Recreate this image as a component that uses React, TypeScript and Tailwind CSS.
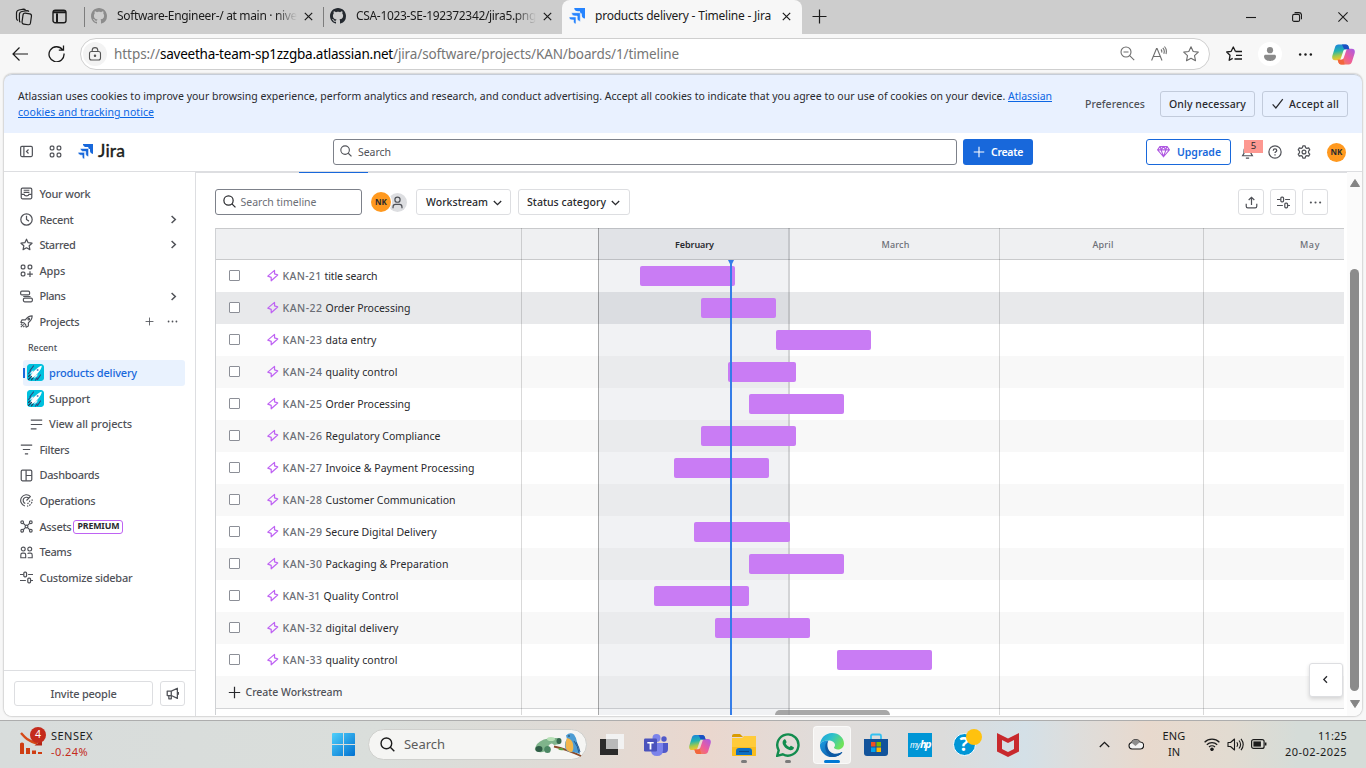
import { useLayoutEffect, useRef } from "react";
import type { ReactNode } from "react";

/* A run of text tracked so that it takes up a given width. */
function T({ w, className = "", children }: { w: number; className?: string; children: string }) {
  const ref = useRef<HTMLSpanElement>(null);
  useLayoutEffect(() => {
    const el = ref.current;
    if (!el) return;
    el.style.letterSpacing = "0px";
    const natural = el.getBoundingClientRect().width;
    el.style.letterSpacing = `${(w - natural) / children.length}px`;
  }, [w, children]);
  return (
    <span ref={ref} className={`inline-block shrink-0 whitespace-pre ${className}`}>
      {children}
    </span>
  );
}

/* Control label, set slightly below the optical centre. */
function L({ w, children }: { w: number; children: string }) {
  return <T w={w} className="pt-[1.5px]">{children}</T>;
}

/* Sidebar label. */
function S({ w, children }: { w: number; children: string }) {
  return <T w={w} className="pt-px">{children}</T>;
}

function Icon({
  children,
  className = "size-[13px]",
  box = 16,
  sw = 1.5,
}: {
  children: ReactNode;
  className?: string;
  box?: number;
  sw?: number;
}) {
  return (
    <svg
      viewBox={`0 0 ${box} ${box}`}
      className={`shrink-0 ${className}`}
      fill="none"
      stroke="currentColor"
      strokeWidth={sw}
    >
      {children}
    </svg>
  );
}

/* ---------- shared glyphs ---------- */

const Close = () => (
  <Icon className="size-[9px]" box={9} sw={1.2}>
    <path d="M.8.8l7.4 7.4M8.2.8L.8 8.2" />
  </Icon>
);
const Plus = ({ className = "size-[13px]" }: { className?: string }) => (
  <Icon className={className}>
    <path d="M8 1v14M1 8h14" />
  </Icon>
);
const ChevronDown = () => (
  <Icon className="size-[9px]" box={9} sw={1.3}>
    <path d="M.8 3l3.700 3.700L8.200 3" />
  </Icon>
);
const ChevronRight = () => (
  <Icon className="size-[9px]" box={9} sw={1.5}>
    <path d="M2.6 1l3.700 3.500L2.600 8" />
  </Icon>
);
const Dots = ({ className = "size-[13px]" }: { className?: string }) => (
  <svg viewBox="0 0 16 16" className={`shrink-0 ${className}`} fill="currentColor">
    <circle cx="2.3" cy="8" r="1.3" />
    <circle cx="8" cy="8" r="1.3" />
    <circle cx="13.7" cy="8" r="1.3" />
  </svg>
);
const Magnifier = ({ className = "size-[13px]" }: { className?: string }) => (
  <Icon className={className}>
    <circle cx="6.800" cy="6.800" r="5.700" />
    <path d="M11 11l4.300 4.300" />
  </Icon>
);
const Sliders = () => (
  <Icon>
    <path d="M0 4.300h4.400M10 4.300h6M0 11.700h7.200M13 11.700h3" />
    <rect x="4.700" y="1.500" width="3.400" height="5.600" rx="1.200" />
    <rect x="9.600" y="8.900" width="3.400" height="5.600" rx="1.200" />
  </Icon>
);
const GitHub = ({ className = "" }: { className?: string }) => (
  <svg viewBox="0 0 16 16" className={`size-4 shrink-0 ${className}`} fill="currentColor">
    <path d="M8 0C3.58 0 0 3.58 0 8c0 3.54 2.29 6.53 5.47 7.59.4.07.55-.17.55-.38 0-.19-.01-.82-.01-1.49-2.01.37-2.53-.49-2.69-.94-.09-.23-.48-.94-.82-1.13-.28-.15-.68-.52-.01-.53.63-.01 1.08.58 1.23.82.72 1.21 1.87.87 2.33.66.07-.52.28-.87.51-1.07-1.78-.2-3.64-.89-3.64-3.95 0-.87.31-1.59.82-2.15-.08-.2-.36-1.02.08-2.12 0 0 .67-.21 2.2.82.64-.18 1.32-.27 2-.27s1.36.09 2 .27c1.53-1.04 2.2-.82 2.2-.82.44 1.1.16 1.92.08 2.12.51.56.82 1.27.82 2.15 0 3.07-1.87 3.75-3.65 3.95.29.25.54.73.54 1.48 0 1.07-.01 1.93-.01 2.2 0 .21.15.46.55.38A8.01 8.01 0 0 0 16 8c0-4.42-3.58-8-8-8z" />
  </svg>
);
const JiraMark = ({ className = "size-4", c = "#1868db", gap = "#fff" }: { className?: string; c?: string; gap?: string }) => (
  <svg viewBox="0 0 16 16" className={`shrink-0 ${className}`} fill={c}>
    <path d="M5.200 0H16v10.600c-2.200-.3-3.200-1.600-3.200-3.400V5.400L11 5.200V3.300H9C6.800 3.300 5.400 2.200 5.200 0z" />
    <path d="M2.500 4.700H11.300V13.400C9.300 13.200 8.200 12.100 8.200 10.300V8H6C4 8 2.700 7 2.500 4.700z" stroke={gap} strokeWidth=".6" />
    <path d="M0 8.900H7V16C5.300 15.800 4.500 14.800 4.500 13.300V11.900H3C1.300 11.900.2 10.800 0 8.900z" stroke={gap} strokeWidth=".6" />
  </svg>
);

/* ---------- browser chrome ---------- */

function TabBar() {
  return (
    <div className="flex h-[34px] shrink-0 items-center bg-[#cdcdcd] text-[12px] text-[#1b1b1b]">
      <div className="flex h-full w-[84px] items-center pb-px gap-[19px] pl-[15px]">
        <Icon className="size-[18px]" box={18} sw={1.2}>
          <rect x="7.500" y="5.500" width="8.500" height="11" rx="2" transform="rotate(8 12 11)" />
          <path d="M5.400 14.200c-1-.4-1-1.200-1-2V6.500c0-2 1-2.700 2.500-3l5-.8c1 0 1.600.3 2 .9M2.900 12.500c-1-.4-1.400-1.200-1.400-2.300V5c0-2 1-2.700 2.500-3L8.500 1.200c1 0 1.600.3 2 .9" />
        </Icon>
        <Icon className="size-[15px]" box={15} sw={1.4}>
          <rect x="1" y="1.200" width="13" height="12.600" rx="2.300" />
          <path d="M1 3.300h13M5 4.500v9" strokeWidth="2" />
        </Icon>
      </div>
      <div className="h-[20px] w-px bg-[#7d7d7d]" />
      <div className="flex h-full w-[238px] items-center pl-[6px] pb-[2px]">
        <GitHub className="text-[#8c8c8c]" />
        <div className="ml-[10px] w-[180px] overflow-hidden [mask-image:linear-gradient(to_right,#000_88%,transparent)]">
          <T w={180}>Software-Engineer-/ at main · nive</T>
        </div>
        <span className="ml-[7px] flex"><Close /></span>
      </div>
      <div className="h-[20px] w-px bg-[#7d7d7d]" />
      <div className="flex h-full w-[238px] items-center pl-[6px] pb-[2px]">
        <GitHub className="text-[#24292f]" />
        <div className="ml-[10px] w-[180px] overflow-hidden [mask-image:linear-gradient(to_right,#000_88%,transparent)]">
          <T w={180}>CSA-1023-SE-192372342/jira5.png</T>
        </div>
        <span className="ml-[7px] flex"><Close /></span>
      </div>
      <div className="flex h-full w-[240px] items-center rounded-t-lg bg-[#f7f7f7] pl-[7px] pb-[2px]">
        <JiraMark c="#2684ff" gap="#f7f7f7" />
        <span className="ml-[10px] w-[187px]"><T w={176}>products delivery - Timeline - Jira</T></span>
        <Close />
      </div>
      <span className="ml-[10px] flex pb-[2px]"><Icon className="size-[15px]" box={15} sw={1.200}><path d="M7.500 .5v14M.5 7.500h14" /></Icon></span>
      <div className="ml-auto flex items-center gap-[36px] pr-[18px]">
        <Icon className="size-[10px]" box={10} sw={1.1}><path d="M0 5.500h10" /></Icon>
        <Icon className="size-[10px]" box={10} sw={1.1}>
          <rect x=".6" y="2.400" width="7" height="7" rx="1.500" />
          <path d="M2.600.600h4.300c1.600 0 2.600 1 2.600 2.600v4" />
        </Icon>
        <Icon className="size-[10px]" box={10} sw={1.1}><path d="M.4.4l9.200 9.200M9.600.4L.4 9.600" /></Icon>
      </div>
    </div>
  );
}

function CopilotMark({ className }: { className: string }) {
  return (
    <svg viewBox="0 0 22 20" className={`shrink-0 ${className}`}>
      <defs>
        <linearGradient id="cpA" x1="0" y1="0" x2="0.2" y2="1">
          <stop offset="0" stopColor="#1b7fe0" />
          <stop offset=".45" stopColor="#22b3b0" />
          <stop offset=".75" stopColor="#a5c94a" />
          <stop offset="1" stopColor="#f4c430" />
        </linearGradient>
        <linearGradient id="cpB" x1="1" y1="0" x2="0" y2="1">
          <stop offset="0" stopColor="#a65ae8" />
          <stop offset=".5" stopColor="#ee5d9a" />
          <stop offset="1" stopColor="#f88b3a" />
        </linearGradient>
      </defs>
      <path d="M6 0.500H13C15 .5 15.600 1.500 16 3L16.600 5H13C11.500 5 11 6 10.500 7.500L8.500 13.500C8 15 7 15.500 5.500 15.500H3C.5 15.500-.3 13.500.4 11L2.800 3.200C3.400 1.300 4.300.5 6 .5z" fill="url(#cpA)" />
      <path d="M16 19.500H9C7 19.500 6.400 18.500 6 17L5.400 15H9C10.500 15 11 14 11.500 12.500L13.500 6.500C14 5 15 4.500 16.500 4.500H19C21.500 4.500 22.300 6.500 21.600 9L19.200 16.800C18.600 18.700 17.700 19.500 16 19.500z" fill="url(#cpB)" />
      <path d="M9.500.5H13C15 .5 15.600 1.500 16 3L16.600 5H13C11.500 5 11 4 10.800 3z" fill="#1b4fc4" />
      <path d="M5.400 15H9c.8 0 1.400-.3 1.800-1L12 19.500H9C7 19.500 6.400 18.500 6 17z" fill="#f2663c" />
    </svg>
  );
}

function AddressBar() {
  return (
    <div className="flex h-[40px] shrink-0 items-center bg-[#f7f7f7] text-[#1b1b1b]">
      <div className="flex w-[80px] items-center gap-[20px] pl-[12px] pb-px">
        <Icon className="size-[16px]" box={16} sw={1.2}><path d="M16 8H1M7.500 1.500L1 8l6.500 6.500" /></Icon>
        <Icon className="size-[17px]" box={17} sw={1.3}>
          <path d="M14.500 4.700A7.500 7.500 0 1 0 16 8.500M15.500 .5v4.700h-4.700" />
        </Icon>
      </div>
      <div className="flex h-[32px] w-[1130px] items-center rounded-full border border-[#cfcfcf] bg-white pl-[2px] pr-[10px] text-[13.500px]">
        <span className="flex size-6 items-center justify-center rounded-full bg-[#f3f3f3] text-[#555]">
          <Icon className="size-[14px]" box={14} sw={1.1}>
            <rect x="1.500" y="4.500" width="11" height="8.500" rx="2" />
            <path d="M4.200 4.500V3.400a2.800 2.800 0 0 1 5.600 0v1.100" />
            <circle cx="7" cy="8.800" r=".7" fill="currentColor" />
          </Icon>
        </span>
        <span className="ml-[7px] flex text-[#767676]">
          <T w={46}>https://</T>
          <T w={233} className="text-black">saveetha-team-sp1zzgba.atlassian.net</T>
          <T w={286}>/jira/software/projects/KAN/boards/1/timeline</T>
        </span>
        <span className="ml-auto flex items-center gap-[16px] pb-px text-[#6e6e6e]">
          <Icon className="size-[15px]" box={15} sw={1.100}>
            <circle cx="6" cy="6" r="5" /><path d="M9.700 9.700l4.500 4.500M3.500 6h5" />
          </Icon>
          <Icon className="size-[16px]" box={16} sw={1.100}>
            <path d="M.6 14.500L5.500 2.500h.6L11 14.500M2.300 10.500h7M10 3.500c.8.8 1 1.800.6 3M11.800 1.800c1.600 1.600 1.900 3.600 1 6M13.500 .5c2 2.200 2.300 4.500 1.500 7.500" />
          </Icon>
          <Icon className="size-[16px]" box={16} sw={1.100}>
            <path d="M8 .8l2.200 4.700 5.100.6-3.800 3.500 1 5.100L8 12.200l-4.500 2.500 1-5.100L.7 6.100l5.100-.6z" strokeLinejoin="round" />
          </Icon>
        </span>
      </div>
      <div className="flex flex-1 items-center pl-[16px]">
        <Icon className="size-[17px]" box={17} sw={1.300}>
          <path d="M9.500 5.500L7.300 1 5.200 5.300.7 6l3.300 3.300-.8 5 3.500-1.900M9.500 5.500h6.500M10 9.300h6M8.500 13h7.500" strokeLinejoin="round" />
        </Icon>
        <span className="ml-[15px] flex size-6 items-center justify-center rounded-full bg-white">
          <svg viewBox="0 0 12 14" className="h-[14px] w-3" fill="#8a8a8a"><circle cx="6" cy="3.200" r="3.100" /><path d="M0 9.300C0 8.300.7 7.700 1.700 7.700h8.600c1 0 1.700.6 1.700 1.600C12 12.300 9.500 14 6 14S0 12.300 0 9.300z" /></svg>
        </span>
        <Dots className="ml-[16px] size-[15px]" />
        <CopilotMark className="ml-[19px] h-[21px] w-[23px]" />
      </div>
    </div>
  );
}

/* ---------- Jira ---------- */

function CookieBanner() {
  return (
    <div className="flex h-[59px] shrink-0 rounded-t-lg border-t border-[#c6cdd8] bg-[#e9f1ff] pl-[14px] text-[10.500px] text-[#292a2e]">
      <div className="w-[1067px] pt-[13px] leading-[16px]">
        <div className="flex">
          <T w={990}>Atlassian uses cookies to improve your browsing experience, perform analytics and research, and conduct advertising. Accept all cookies to indicate that you agree to our use of cookies on your device. </T>
          <T w={44} className="text-[#0c66e4] underline">Atlassian</T>
        </div>
        <T w={136} className="text-[#0c66e4] underline">cookies and tracking notice</T>
      </div>
      <div className="box-content flex h-[26px] items-center pt-[16px] font-medium">
        <span className="flex text-[#505258]"><L w={60}>Preferences</L></span>
        <div className="ml-[15px] flex h-[26px] w-[95px] items-center justify-center rounded-[3px] border border-[#c2cbdb]"><L w={77}>Only necessary</L></div>
        <div className="ml-[7px] flex h-[26px] w-[86px] items-center justify-center gap-[5px] rounded-[3px] border border-[#c2cbdb]">
          <Icon className="mb-px size-[13px]"><path d="M2 9l4 4.500L14.500 2.500" /></Icon>
          <L w={50}>Accept all</L>
        </div>
      </div>
    </div>
  );
}

function JiraHeader() {
  return (
    <div className="flex h-[39px] shrink-0 items-center border-b border-[#dddee1] bg-white pl-[16px] text-[10.500px] text-[#505258]">
      <Icon className="mb-px size-[13px]">
        <rect x=".8" y="1.800" width="14.400" height="12.400" rx="1.500" /><path d="M4.800 2v12M10.500 5.500L8 8l2.500 2.500" />
      </Icon>
      <Icon className="mb-px ml-[16px] size-[13px]">
        <rect x="1.500" y="1.500" width="4.500" height="4.500" rx="1.300" /><rect x="10" y="1.500" width="4.500" height="4.500" rx="1.300" />
        <rect x="1.500" y="10" width="4.500" height="4.500" rx="1.300" /><rect x="10" y="10" width="4.500" height="4.500" rx="1.300" />
      </Icon>
      <JiraMark className="mb-px ml-[16px] size-[15px]" />
      <span className="mb-[3px] ml-[5px] flex font-['Lato'] text-[17.500px] leading-none font-medium text-[#1e1f21] [-webkit-text-stroke:0.3px_#1e1f21]"><T w={27}>Jira</T></span>
      <div className="ml-[208px] flex h-[26px] w-[624px] items-center rounded-[3px] border border-[#7d818a] pl-[6px]">
        <Magnifier className="mb-[2px] size-[12px]" />
        <span className="ml-[6px] flex"><L w={33}>Search</L></span>
      </div>
      <div className="ml-[6px] flex h-[26px] w-[70px] items-center rounded-[3px] bg-[#1868db] pl-[10px] font-semibold text-white">
        <Plus className="mb-px size-[12px]" />
        <span className="ml-[6px] flex"><L w={32}>Create</L></span>
      </div>
      <div className="ml-[113px] flex h-[26px] w-[85px] items-center rounded-[3px] border border-[#1868db] pl-[10px] font-semibold text-[#1868db]">
        <span className="mb-px flex text-[#af59e1]">
          <Icon className="size-[13px]" sw={1.300}><path d="M3.500 2h9L15.300 6 8 14.500.7 6zM1 6h14M5 6l3 8 3-8-3-4zM5 6l-1-4M11 6l1-4" /></Icon>
        </span>
        <span className="ml-[7px] flex"><L w={44}>Upgrade</L></span>
      </div>
      <div className="relative ml-[10px]">
        <Icon><path d="M2 12h12l-1.700-3V6a4.300 4.300 0 0 0-8.600 0v3zM6 14.800h4" /></Icon>
        <span className="absolute -top-[6px] left-[3px] flex h-[13px] w-[19px] items-center justify-center bg-[#fd9891] text-[9.500px] text-[#292a2e]">5</span>
      </div>
      <Icon className="mb-px ml-[14px] size-[14px]" sw={1.400}>
        <circle cx="8" cy="8" r="7" /><path d="M6 6.500c0-1.200.8-2 2-2s2 .7 2 1.800c0 1.400-2 1.400-2 2.900M8 10.500v1.500" />
      </Icon>
      <Icon className="mb-px ml-[15px] size-[14px]" sw={1.400}>
        <circle cx="8" cy="8" r="2.200" />
        <path d="M6.700 1h2.600l.5 2 1.500.9 2-.6 1.300 2.300L13.200 7v2l1.400 1.400-1.300 2.300-2-.6-1.500.9-.5 2H6.700l-.5-2-1.500-.9-2 .6-1.300-2.300L2.800 9V7L1.400 5.600l1.300-2.300 2 .6L6.200 3z" strokeLinejoin="round" />
      </Icon>
      <span className="ml-[16px] flex size-[19px] items-center justify-center rounded-full bg-[#ff991f] text-[8px] font-bold text-[#292a2e]"><T w={12}>NK</T></span>
    </div>
  );
}

function SideItem({ icon, children, right }: { icon: ReactNode; children: ReactNode; right?: ReactNode }) {
  return (
    <div className="flex h-[25.600px] items-center pl-[16px] pr-[17px]">
      {icon}
      <span className="ml-[6.400px] flex items-center">{children}</span>
      <span className="ml-auto flex items-center gap-[13px]">{right}</span>
    </div>
  );
}

function ProjectAvatar() {
  return (
    <svg viewBox="0 0 17 17" className="size-[17px] shrink-0 rounded-[3px]">
      <rect width="17" height="17" rx="2.500" fill="#00c1de" />
      <path d="M3 6.500L6.500 2M1.500 9.500l2-2.500M10.500 15.500l3-4.500M8.500 16l1.500-2" stroke="#2b4a80" strokeWidth="1.200" strokeLinecap="round" />
      <path d="M14.800 1.800C11.500 2 5 8.500 3.300 12.200l1.700 1.800C9 12.300 14.700 5.500 14.800 1.800z" fill="#fff" />
      <path d="M6.500 6.200C5 6.500 3.500 8 3 10l3-1zM10.800 10.200C10.500 12 9 13.500 7 14.200l1-3z" fill="#dfe9f7" />
      <path d="M1.500 15.500L4.500 12.300M4.500 15.800L6 14M1.500 12.500L3 11" stroke="#253858" strokeWidth="1.100" strokeLinecap="round" />
      <circle cx="10.600" cy="6" r="1" fill="#5e84c0" />
    </svg>
  );
}

function Sidebar() {
  return (
    <div className="flex w-[192px] shrink-0 flex-col border-r border-[#dddee1] bg-white pt-[9px] text-[11px] font-medium text-[#505258]">
      <SideItem icon={<Icon><rect x="1.500" y="1.500" width="13" height="13" rx="1.500" /><path d="M1.500 9h3.500c.3 1.500 1.300 2 3 2s2.700-.5 3-2h3.500M4.500 4h7M4.500 6.500h7" /></Icon>}><S w={51}>Your work</S></SideItem>
      <SideItem icon={<Icon><circle cx="8" cy="8" r="7" /><path d="M8 3.500V8l3 2" /></Icon>} right={<ChevronRight />}><S w={34}>Recent</S></SideItem>
      <SideItem icon={<Icon><path d="M8 1.500l2 4.300 4.800.6-3.500 3.200.9 4.700L8 12l-4.200 2.300.9-4.700L1.200 6.400 6 5.800z" strokeLinejoin="round" /></Icon>} right={<ChevronRight />}><S w={36}>Starred</S></SideItem>
      <SideItem icon={<Icon><rect x="1.500" y="1.500" width="4.500" height="4.500" rx="1.300" /><rect x="10" y="1.500" width="4.500" height="4.500" rx="1.300" /><rect x="1.500" y="10" width="4.500" height="4.500" rx="1.300" /><path d="M12.300 9v7M8.800 12.500h7" /></Icon>}><S w={26}>Apps</S></SideItem>
      <SideItem icon={<Icon><rect x=".8" y="1.500" width="11" height="4.500" rx="1.500" /><rect x="4.200" y="10" width="11" height="4.500" rx="1.500" /><path d="M4 8h9" strokeWidth="1.200" /></Icon>} right={<ChevronRight />}><S w={26}>Plans</S></SideItem>
      <SideItem
        icon={<Icon sw={1.400}><path d="M15 1c-4 0-6 1.500-8.500 5H2.500L1 9l3.500.5L7 12l.5 3 2.800-1.500v-4C13.500 7 15 5 15 1zM1 15l3.500-3.500M4 15l1.500-1.500M1 12l1.500-1.500" strokeLinejoin="round" /><circle cx="10.800" cy="5.200" r="1" /></Icon>}
        right={<><Plus className="size-[9px]" /><Dots className="size-[11px]" /></>}
      ><S w={40}>Projects</S></SideItem>
      <div className="flex h-[25.600px] items-center pl-[24px] text-[9px]"><S w={29}>Recent</S></div>
      <div className="ml-[19px] flex h-[25.600px] w-[162px] items-center rounded-[3px] bg-[#e9f2fe] text-[#1868db]">
        <span className="h-[10px] w-[2px] bg-[#1868db]" />
        <span className="ml-[2px] flex"><ProjectAvatar /></span>
        <span className="ml-[5px] flex"><T w={88}>products delivery</T></span>
      </div>
      <div className="flex h-[25.600px] items-center pl-[23px]">
        <ProjectAvatar /><span className="ml-[5px] flex"><S w={41}>Support</S></span>
      </div>
      <div className="flex h-[25.600px] items-center pl-[26px]">
        <Icon><path d="M1 2.500h14M1 8h14M1 13.500h7" /></Icon><span className="ml-[6px] flex"><T w={83}>View all projects</T></span>
      </div>
      <SideItem icon={<Icon><path d="M1 2.500h14M3.500 8h9M6 13.500h4" /></Icon>}><S w={30}>Filters</S></SideItem>
      <SideItem icon={<Icon><rect x="1.500" y="1.500" width="13" height="13" rx="1.500" /><path d="M7.500 1.500v13M7.500 8h7" /></Icon>}><T w={60}>Dashboards</T></SideItem>
      <SideItem icon={<Icon sw={1.400}><path d="M13 3.200A7 7 0 1 0 6 14.700" /><path d="M10.800 5.200A4 4 0 1 0 6.500 11.700M8 8l5-5" /><path d="M14.800 6.500a7 7 0 0 1-6 8.400M12 8a4 4 0 0 1-3 3.900" strokeDasharray="2 1.300" /></Icon>}><T w={56}>Operations</T></SideItem>
      <SideItem icon={<Icon sw={1.400}><circle cx="8" cy="8" r="1.700" /><circle cx="2.700" cy="2.700" r="1.700" /><circle cx="13.300" cy="2.700" r="1.700" /><circle cx="2.700" cy="13.300" r="1.700" /><circle cx="13.300" cy="13.300" r="1.700" /><path d="M4 4l2.700 2.700M12 4L9.300 6.700M4 12l2.700-2.700M12 12L9.300 9.300" /></Icon>}>
        <S w={32}>Assets</S>
        <span className="ml-[2px] mt-px flex h-[14px] w-[50px] items-center justify-center rounded-[3px] border border-[#bf63f3] text-[8.800px] font-bold text-[#292a2e]"><T w={42}>PREMIUM</T></span>
      </SideItem>
      <SideItem icon={<Icon sw={1.400}><circle cx="4" cy="3.700" r="2.400" /><circle cx="12" cy="3.700" r="2.400" /><path d="M1 14.500V11c0-1.500.8-2.300 2-2.300h2c1.200 0 2 .8 2 2.300v3.500zM9.500 14.500H15V11c0-1.500-.8-2.300-2-2.300h-2c-.8 0-1.300.3-1.600.8" /></Icon>}><T w={32}>Teams</T></SideItem>
      <SideItem icon={<Sliders />}><S w={93}>Customize sidebar</S></SideItem>
      <div className="mt-auto flex h-[46px] shrink-0 items-center gap-[7px] border-t border-[#dddee1] pl-[10px]">
        <div className="flex h-[25px] w-[139px] items-center justify-center rounded-[3px] border border-[#dddee1]"><L w={66}>Invite people</L></div>
        <div className="flex h-[25px] w-[25px] items-center justify-center rounded-[3px] border border-[#dddee1]">
          <Icon sw={1.600}><path d="M1.500 5h5v5.500h-5zM6.500 5L14 1.500V14l-7.500-3.500M3.500 10.500v4h3v-4M15.200 6v3.500" strokeLinejoin="round" /></Icon>
        </div>
      </div>
    </div>
  );
}

type Item = { id: string; idW: number; name: string; w: number; from?: number; to?: number };

const items: Item[] = [
  { id: "KAN-21", idW: 39, name: "title search", w: 53, from: 640, to: 735 },
  { id: "KAN-22", idW: 40, name: "Order Processing", w: 85, from: 701, to: 776 },
  { id: "KAN-23", idW: 40, name: "data entry", w: 51, from: 776, to: 871 },
  { id: "KAN-24", idW: 40, name: "quality control", w: 72, from: 728, to: 796 },
  { id: "KAN-25", idW: 40, name: "Order Processing", w: 85, from: 749, to: 844 },
  { id: "KAN-26", idW: 40, name: "Regulatory Compliance", w: 115, from: 701, to: 796 },
  { id: "KAN-27", idW: 40, name: "Invoice & Payment Processing", w: 149, from: 674, to: 769 },
  { id: "KAN-28", idW: 40, name: "Customer Communication", w: 130 },
  { id: "KAN-29", idW: 40, name: "Secure Digital Delivery", w: 111, from: 694, to: 790 },
  { id: "KAN-30", idW: 40, name: "Packaging & Preparation", w: 123, from: 749, to: 844 },
  { id: "KAN-31", idW: 38, name: "Quality Control", w: 75, from: 654, to: 749 },
  { id: "KAN-32", idW: 40, name: "digital delivery", w: 73, from: 715, to: 810 },
  { id: "KAN-33", idW: 40, name: "quality control", w: 72, from: 837, to: 932 },
];

const CHART_LEFT = 522;

function Row({ item, index }: { item: Item; index: number }) {
  const shade = index === 1 ? "bg-[#e8e9eb]" : index % 2 ? "bg-[#f8f8f8]" : "bg-white";
  return (
    <div className={`flex h-8 items-center ${shade}`}>
      <div className="flex w-[306px] shrink-0 items-center pl-[13px]">
        <span className="mb-px size-[11px] rounded-[1px] border border-[#8c8f97] bg-white" />
        <Icon className="mb-px ml-[26px] size-[13px] text-[#bf63f3]" sw={1.500}>
          <path d="M10.500 1.700L2.200 8.800l4.200 1.500v4.200l8-7.200L10.500 6z" strokeLinejoin="round" />
        </Icon>
        <span className="ml-[3.500px] flex font-medium text-[#6b6e76]"><L w={item.idW}>{item.id}</L></span>
        <span className="ml-[3px] flex text-[#292a2e]"><L w={item.w}>{item.name}</L></span>
      </div>
      {item.from !== undefined && item.to !== undefined && (
        <div
          className="relative z-10 h-5 rounded-[2px] bg-[#c97cf4]"
          style={{ marginLeft: item.from - CHART_LEFT, width: item.to - item.from }}
        />
      )}
    </div>
  );
}

function FilterBar() {
  return (
    <div className="flex h-[26px] items-center pl-[19px] text-[10.500px] font-medium text-[#292a2e]">
      <div className="flex h-[26px] w-[147px] items-center rounded-[3px] border border-[#7d818a] pl-[7px]">
        <Magnifier className="mb-px size-[13px]" />
        <span className="ml-[4.500px] flex font-normal text-[#6b6e76]"><L w={76}>Search timeline</L></span>
      </div>
      <span className="relative z-10 ml-[9px] flex size-[20px] items-center justify-center rounded-full bg-[#ff991f] text-[8px] font-bold ring-1 ring-white"><T w={12}>NK</T></span>
      <span className="-ml-[3px] flex size-[19px] items-center justify-center rounded-full bg-[#dddee1] text-[#505258]">
        <Icon><circle cx="8" cy="4.500" r="3.200" /><path d="M2.500 15v-1.500c0-2 1.200-3.300 3-3.300h5c1.800 0 3 1.300 3 3.300V15" /></Icon>
      </span>
      <div className="ml-[9px] flex h-[26px] w-[95px] items-center rounded-[3px] border border-[#dddee1] pl-[9px]"><L w={62}>Workstream</L><span className="ml-[5px] flex"><ChevronDown /></span></div>
      <div className="ml-[7px] flex h-[26px] w-[112px] items-center rounded-[3px] border border-[#dddee1] pl-[8px]"><L w={79}>Status category</L><span className="ml-[5px] flex"><ChevronDown /></span></div>
      <div className="ml-auto flex gap-[6px] pr-[19px] text-[#505258]">
        <div className="flex size-[26px] items-center justify-center rounded-[3px] border border-[#dddee1]"><Icon><path d="M8 11V2M4.500 5L8 1.700 11.500 5M1.500 9.500v3c0 1.200.7 2 2 2h9c1.300 0 2-.8 2-2v-3" /></Icon></div>
        <div className="flex size-[26px] items-center justify-center rounded-[3px] border border-[#dddee1]"><Sliders /></div>
        <div className="flex size-[26px] items-center justify-center rounded-[3px] border border-[#dddee1]"><Dots /></div>
      </div>
    </div>
  );
}

function Timeline() {
  return (
    <div className="relative ml-[19px] mr-[3px] mt-[13px] h-[487px] overflow-hidden border-l border-[#cfd1d4] text-[10.500px]">
      <div className="flex h-8 items-center border-y border-[#c9cacc] bg-[#eff0f2] text-[9px] font-medium text-[#6b6e76]">
        <div className="w-[383px]" />
        <div className="flex w-[191px] justify-center font-semibold text-[#292a2e]"><L w={39}>February</L></div>
        <div className="flex w-[211px] justify-center"><L w={28}>March</L></div>
        <div className="flex w-[204px] justify-center"><L w={21}>April</L></div>
        <div className="flex flex-1 justify-end pr-[24px]"><L w={20}>May</L></div>
      </div>
      {items.map((item, i) => (
        <Row key={item.id} item={item} index={i} />
      ))}
      <div className="flex h-[33px] items-center border-b border-[#d3d4d6] bg-[#f8f8f8] pl-[12px] font-medium text-[#505258]">
        <Plus className="size-[13px] text-[#292a2e]" />
        <span className="ml-[4.500px] flex"><L w={97}>Create Workstream</L></span>
      </div>
      {/* month rules, current month shade and today marker lie over the rows */}
      <div className="pointer-events-none absolute inset-y-0 left-[305px] w-px bg-black/15" />
      <div className="pointer-events-none absolute inset-y-0 left-[382px] w-[192px] border-l border-r-2 border-l-black/30 border-r-black/12 bg-[#091e42]/6" />
      <div className="pointer-events-none absolute inset-y-0 left-[783px] w-px bg-black/15" />
      <div className="pointer-events-none absolute inset-y-0 left-[987px] w-px bg-black/15" />
      <div className="absolute bottom-0 left-[514px] top-[32px] z-20 w-[2px] bg-[#357de8]" />
      <svg viewBox="0 0 6 4" className="absolute left-[512px] top-[32px] z-20 h-1 w-[6px]" fill="#357de8"><path d="M0 0h6L4 4H2z" /></svg>
      <div className="absolute bottom-0 left-[559px] z-20 h-[5px] w-[115px] rounded-t-[5px] bg-[#8b8b8b]/75" />
      <div className="absolute bottom-[18px] right-px z-30 flex size-[34px] items-center justify-center rounded-[3px] border border-[#dddee1] bg-white pb-px pr-[2px] text-[#292a2e] shadow-[0_2px_4px_rgba(0,0,0,0.15)]">
        <Icon className="size-[9px]" box={9} sw={1.300}><path d="M6 1.200L2.800 4.500 6 7.800" /></Icon>
      </div>
    </div>
  );
}

function JiraPage() {
  return (
    <div className="mx-[4px] flex h-[642px] shrink-0 flex-col overflow-hidden rounded-lg bg-white shadow-[0_0_2px_rgba(0,0,0,0.45)]">
      <CookieBanner />
      <JiraHeader />
      <div className="flex min-h-0 flex-1">
        <Sidebar />
        <div className="min-w-0 flex-1">
          <div className="flex h-px bg-[#dddee1] pl-[103px]"><span className="h-px w-[69px] bg-[#1868db]" /></div>
          <div className="h-[16px]" />
          <FilterBar />
          <Timeline />
        </div>
        <div className="flex w-[15px] shrink-0 flex-col items-center bg-[#fbfbfb] pt-[7px]">
          <svg viewBox="0 0 10 8" className="h-2 w-[10px]" fill="#858585"><path d="M5 .5L9.500 7.500H.5z" stroke="#858585" strokeLinejoin="round" /></svg>
          <span className="mt-[82px] h-[422px] w-[9px] rounded-full bg-[#8b8b8b]" />
          <svg viewBox="0 0 10 8" className="mt-[9px] h-2 w-[10px]" fill="#858585"><path d="M5 7.500L9.500.5H.5z" stroke="#858585" strokeLinejoin="round" /></svg>
        </div>
      </div>
    </div>
  );
}

/* ---------- taskbar ---------- */

function TaskButton({ children, active, running }: { children: ReactNode; active?: boolean; running?: boolean }) {
  return (
    <div className="relative flex h-12 w-11 shrink-0 items-center justify-center">
      {active && <span className="absolute inset-x-[3px] inset-y-[5px] rounded-[4px] border border-white/60 bg-white/60" />}
      <span className="relative flex">{children}</span>
      {active && <span className="absolute bottom-[6px] h-[3px] w-4 rounded-full bg-[#0078d4]" />}
      {running && <span className="absolute bottom-[6px] h-[3px] w-[6px] rounded-full bg-[#7b7b7b]" />}
    </div>
  );
}

function Taskbar() {
  return (
    <div className="flex h-12 shrink-0 items-center border-t border-[#adadad] bg-[linear-gradient(90deg,#d8dcdb_0%,#dadedb_28%,#dedbd6_40%,#ead7ce_52%,#e0dcda_60%,#dcdcdb_69%,#d4e0e7_75%,#dedddb_79%,#e8d9cd_84%,#e2dbd1_90%,#d5dcd8_95%)] text-[12px] text-[#1b1b1b]">
      <div className="flex w-[332px] items-center pb-[2px] pl-[19px]">
        <div className="relative">
          <svg viewBox="0 0 24 24" className="h-6 w-6">
            <path d="M1 11.500q2-2 4 0V22H1zM7 16h4v6H7zM13 18.500h4V22h-4zM19 20h4v2h-4z" fill="#cf3d12" />
            <path d="M2 1C5.500 5 8 8.500 18 11.500" stroke="#d64a18" strokeWidth="2.400" fill="none" />
            <path d="M15.500 13.500H23V8z" fill="#b32414" />
          </svg>
          <span className="absolute -top-[5px] left-[11px] flex size-4 items-center justify-center rounded-full bg-[#c42b1c] text-[10.500px] leading-none text-white">4</span>
        </div>
        <div className="ml-[8px] text-[11px] leading-[16px]">
          <div><T w={42}>SENSEX</T></div>
          <div><T w={37} className="text-[#c42b1c]">-0.24%</T></div>
        </div>
      </div>
      <svg viewBox="0 0 23 23" className="size-[23px] shrink-0">
        <defs><linearGradient id="win" x1="0" y1="0" x2="1" y2="1"><stop offset="0" stopColor="#4fd0fb" /><stop offset="1" stopColor="#0070d0" /></linearGradient></defs>
        <path d="M0 1Q0 0 1 0H11V11H0zM12 0h10q1 0 1 1v10H12zM0 12h11v11H1q-1 0-1-1zM12 12h11v10q0 1-1 1H12z" fill="url(#win)" />
      </svg>
      <div className="ml-[13px] flex h-[31px] w-[219px] shrink-0 items-center rounded-full border border-[#cfd0cd] bg-[#f5f5f3] pl-[11px] pr-[4px]">
        <Magnifier className="size-[15px]" />
        <span className="ml-[9px] flex text-[13px] text-[#5c5c5c]"><T w={41}>Search</T></span>
        <svg viewBox="0 0 48 26" className="ml-auto h-[26px] w-12">
          <path d="M3 12Q9 5 23 6q4 1 3 6l-6 1q-2-3-5 0l-2 4q-3 4-8 3-5-1-4-4z" fill="#7fb48b" />
          <ellipse cx="5" cy="17" rx="3.500" ry="3" fill="#2f5c46" /><ellipse cx="13.500" cy="17.500" rx="3.300" ry="3.500" fill="#4c8864" />
          <ellipse cx="25" cy="9" rx="2.500" ry="3" fill="#35684e" /><ellipse cx="17" cy="7" rx="4" ry="2" fill="#b6e0b5" />
          <path d="M20 14.500Q32 17 47 24" stroke="#8a4a28" strokeWidth="1.800" fill="none" />
          <path d="M24 17q4-3 6 1-4 1-6-1z" fill="#5fa83e" />
          <path d="M32 3.500Q36-.5 40 2.500 42 5 43 10l3 12-3-1-4-1q-7 1-8-5-.5-5 2-8z" fill="#4c9cd3" />
          <path d="M33 6q5 1 6 6t-1 8q-6 0-6.500-6 0-5 1.500-8z" fill="#f3b64a" />
          <circle cx="35" cy="4" r=".7" fill="#222" />
          <path d="M40 9q4 5 5 12M42 10q3 5 4 10" stroke="#245d94" strokeWidth="1" fill="none" />
        </svg>
      </div>
      <div className="ml-[3px] flex">
        <TaskButton>
          <svg viewBox="0 0 24 24" className="size-6"><path d="M0 6h18v16H0z" fill="#2b2b2b" /><path d="M6 1h18v15H6z" fill="#f2f2f2" /><path d="M6 6h12v10H6z" fill="#b9b9b9" /></svg>
        </TaskButton>
        <TaskButton>
          <svg viewBox="0 0 24 24" className="size-6">
            <circle cx="20" cy="6" r="2.700" fill="#5059c9" /><path d="M16 10h8v6q0 4-4 4h-3z" fill="#5059c9" />
            <circle cx="12.500" cy="5" r="4" fill="#7b83eb" /><path d="M7 10h12v7q0 6-6 6t-6-6z" fill="#7b83eb" />
            <rect y="5.500" width="13" height="13" rx="1.200" fill="#4b53bc" /><path d="M3.300 9h6.400v1.600H7.400v6H5.600v-6H3.300z" fill="#fff" />
          </svg>
        </TaskButton>
        <TaskButton><CopilotMark className="h-[21px] w-[22px]" /></TaskButton>
        <TaskButton running>
          <svg viewBox="0 0 24 24" className="size-6">
            <path d="M0 3q0-2 2-2h6l3 3H0z" fill="#d99b00" /><path d="M0 5h10l2-2h12v19q0 1-1 1H1q-1 0-1-1z" fill="#ffcb3a" />
            <path d="M0 14h24v8q0 1-1 1H1q-1 0-1-1z" fill="#f9bd1f" /><path d="M4 18q0-3 3-3h10q3 0 3 3v4H4z" fill="#0f6fc2" /><path d="M7 18.500h10" stroke="#0a4a8c" strokeWidth="1.200" />
          </svg>
        </TaskButton>
        <TaskButton running>
          <svg viewBox="0 0 24 24" className="size-6">
            <path d="M1.200 22.800l1.500-5.500A10.600 10.600 0 1 1 6.800 21.300z" fill="none" stroke="#128c4e" strokeWidth="2.400" />
            <path d="M8 6.500c.5-.5 1.300-.4 1.600.2l.9 2c.2.500 0 .8-.8 1.700.9 1.900 2.200 3 4 3.700.9-1.200 1.200-1.400 1.700-1.200l2 1c.6.300.7.700.3 1.700-.6 1.600-2.500 2-4.200 1.500-3.500-1-5.500-3.200-6.600-5.800C6.200 9.400 6.700 7.600 8 6.500z" fill="#128c4e" />
          </svg>
        </TaskButton>
        <TaskButton active>
          <svg viewBox="0 0 24 24" className="size-6">
            <defs>
              <linearGradient id="edT" x1="0" y1="0" x2="1" y2=".5"><stop offset="0" stopColor="#1b9de2" /><stop offset=".5" stopColor="#2fc2c9" /><stop offset="1" stopColor="#6fe25c" /></linearGradient>
              <linearGradient id="edB" x1="0" y1="0" x2="1" y2="1"><stop offset="0" stopColor="#1b9de2" /><stop offset="1" stopColor="#0a4a9c" /></linearGradient>
            </defs>
            <path d="M0 11.500C.5 5 5.500 0 12 0c7 0 12 5 12 10.500 0 3.500-2.700 6-6 6-2.500 0-4-.9-4-1.900 0-.7 1-1 1-2.600 0-2.500-3-4.500-6.500-4.500C4 7.500 1 9 0 11.500z" fill="url(#edT)" />
            <path d="M0 11.500c1-2.500 4-4 8.500-4C5.500 9.500 6 21 15 21c3 0 5.500-1.200 6.500-1.800.5-.3.900.1.500.6-2 2.700-5.500 4.200-10 4.200C5 24-.5 18 0 11.500z" fill="url(#edB)" />
            <path d="M8.500 7.500c-2 3-1.500 10 3.500 12.500 3.500 1.500 7 .8 9.500-.8.500-.3.900.1.500.6-2 2.700-5 4-8.500 4.100C6 23 2 12 8.500 7.500z" fill="#0c59a4" />
          </svg>
        </TaskButton>
        <TaskButton>
          <svg viewBox="0 0 24 24" className="size-6">
            <path d="M7 6V3q0-1.500 1.500-1.500h7Q17 1.500 17 3v3" fill="none" stroke="#35c1f1" strokeWidth="1.800" />
            <path d="M0 6h24v14q0 3-3 3H3q-3 0-3-3z" fill="#12539b" />
            <path d="M7 9h4.500v4.500H7z" fill="#f25022" /><path d="M12.500 9H17v4.500h-4.500z" fill="#7fba00" /><path d="M7 14.500h4.500V19H7z" fill="#00a4ef" /><path d="M12.500 14.500H17V19h-4.500z" fill="#ffb900" />
          </svg>
        </TaskButton>
        <TaskButton>
          <span className="flex size-6 items-center justify-center bg-[#0096d6] italic text-white"><T w={10} className="text-[8px]">my</T><T w={10} className="text-[11px] font-bold">hp</T></span>
        </TaskButton>
        <TaskButton>
          <span className="relative flex size-[23px] items-center justify-center rounded-full border border-white bg-[#0096d6] text-[19px] leading-none font-bold text-white">
            ?<span className="absolute -top-[5px] left-[12px] size-4 rounded-full bg-[#ffc20e]" />
          </span>
        </TaskButton>
        <TaskButton>
          <svg viewBox="0 0 22 24" className="h-6 w-[22px]"><path d="M0 0l11 5.500L22 0v18.500L11 24 0 18.500zM5 7v9l6 3 6-3V7l-6 3z" fill="#c8292d" fillRule="evenodd" /></svg>
        </TaskButton>
      </div>
      <div className="ml-auto flex items-center pr-[19px] pb-px">
        <Icon className="size-[11px]" box={11} sw={1.300}><path d="M.8 8l4.700-4.700L10.200 8" /></Icon>
        <svg viewBox="0 0 16 12" className="ml-[18px] h-3 w-4"><path d="M4 11a3.300 3.300 0 0 1-.4-6.500A4.600 4.600 0 0 1 12 4a3.500 3.500 0 0 1 .3 7z" fill="#f3f3f3" stroke="#1b1b1b" strokeWidth="1.100" /><path d="M3.500 4.800A4.600 4.600 0 0 1 12 4L7.500 8z" fill="#8d8d8d" /></svg>
        <div className="ml-[18px] flex w-[24px] flex-col items-center pb-px text-[11px] leading-[16px]"><T w={23}>ENG</T><T w={12}>IN</T></div>
        <Icon className="ml-[18px] size-[16px]" sw={1.200}><path d="M.6 6.200a10.500 10.500 0 0 1 14.800 0M2.800 8.700a7.400 7.400 0 0 1 10.400 0M5 11a4.300 4.300 0 0 1 6 0" /><circle cx="8" cy="13.300" r="1.200" fill="currentColor" /></Icon>
        <Icon className="ml-[7px] size-[17px]" box={17} sw={1.100}><path d="M1 6.500h2.500L7.500 3v11l-4-3.500H1zM9.800 6.200c1 1.400 1 3.200 0 4.600M12 4.500c2 2.500 2 5.500 0 8M14 2.800c2.700 3.500 2.700 7.900 0 11.400" strokeLinejoin="round" /></Icon>
        <svg viewBox="0 0 16 10" className="ml-[7px] h-[10px] w-4"><rect x=".6" y=".6" width="12.500" height="8.800" rx="2" fill="none" stroke="#1b1b1b" strokeWidth="1.200" /><rect x="2.400" y="2.400" width="7.500" height="5.200" fill="#1b1b1b" /><path d="M14.700 3.500v3" stroke="#1b1b1b" strokeWidth="1.500" /></svg>
        <div className="ml-[18px] flex w-[62px] flex-col items-end pb-px text-[11px] leading-[16px]"><T w={29}>11:25</T><T w={62}>20-02-2025</T></div>
      </div>
    </div>
  );
}

export default function App() {
  return (
    <div className="flex h-[768px] w-[1366px] flex-col overflow-hidden bg-[#f7f7f7] font-['Noto_Sans',sans-serif]">
      <TabBar />
      <AddressBar />
      <JiraPage />
      <div className="h-[4px] shrink-0" />
      <Taskbar />
    </div>
  );
}
